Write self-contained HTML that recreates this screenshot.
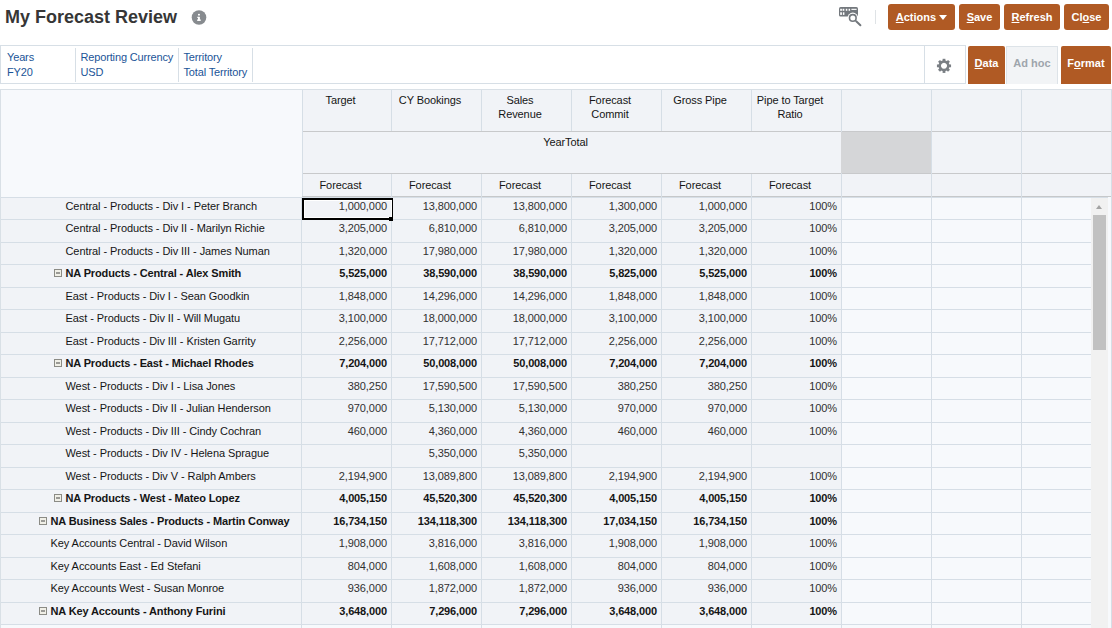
<!DOCTYPE html><html><head><meta charset="utf-8"><title>My Forecast Review</title><style>*{box-sizing:border-box}
html,body{margin:0;padding:0;background:#fff;width:1112px;height:628px;overflow:hidden;font-family:"Liberation Sans",sans-serif;position:relative}
body>div{position:absolute}
.title{left:5px;top:6px;font-size:18px;line-height:22px;font-weight:bold;color:#363636;white-space:nowrap}
.info{left:191px;top:9px;width:16px;height:16px;line-height:0}
.kbd{left:838px;top:6px;line-height:0}
.sep{left:875px;top:10px;width:1px;height:14px;background:#dfe3e6}
.btn{top:4px;height:26px;background:#b05a24;color:#fff;border-radius:3px;font-size:11px;font-weight:bold;text-align:center;line-height:26px;white-space:nowrap}
.tri{display:inline-block;width:0;height:0;border-left:4.5px solid transparent;border-right:4.5px solid transparent;border-top:5px solid #fff;vertical-align:middle;margin-left:0;position:relative;top:-1px}
.pov{left:0;top:45px;width:966px;height:39px;border:1px solid #d7dfe6;background:#fff}
.povc{top:50px;font-size:11px;letter-spacing:-0.15px;line-height:14.5px;color:#1b5497;white-space:nowrap}
.povsep{top:48px;width:1px;height:34px;background:#d7dfe6}
.gearsep{left:924px;top:45px;width:1px;height:39px;background:#d7dfe6}
.gear{left:934px;top:56px;line-height:0}
.tab{top:46px;height:38px;font-size:11px;font-weight:bold;text-align:center;line-height:34px;white-space:nowrap}
.tab.act{background:#b05a24;color:#fff;border-radius:2px 2px 0 0}
.tab.adhoc{background:#f2f4f6;color:#9ea5ac;border:1px solid #dde3e8;border-bottom:none;line-height:32px}
.gbg{left:0;top:89px;width:1112px;height:539px;background:#f7f9fc}
.corner{left:0;top:89px;width:302px;height:107px;background:#f7f9fc}
.hbg{background:#f1f3f7}
.h2gray{left:841px;top:132px;width:90px;height:41px;background:#d5d6d8;z-index:1}
.dbg{left:1px;width:840px;background:#f1f3f7}
.hl{height:1px;background:#d6dee6}
.vl{width:1px;background:#d6dee6}
.ht{font-size:11px;letter-spacing:-0.1px;color:#151515;text-align:center;line-height:14px;white-space:nowrap}
.h1t{top:93px}
.h2t{top:135px}
.h3t{top:178px}
.t{font-size:11px;letter-spacing:-0.07px;line-height:16px;height:16px;margin-top:1px;color:#151515;white-space:nowrap}
.t.n{text-align:right;color:#303030}
.t.b{font-weight:bold;color:#151515;letter-spacing:-0.13px}
.ex{width:8px;height:8px;border:1px solid #8b8b85;background:#f0efe7}
.ex:after{content:"";position:absolute;left:1px;top:2px;width:4px;height:2px;background:#9a9a96}
.sel{left:302px;top:198px;width:91px;height:22px;border:2px solid #000;border-right-width:1.5px;box-shadow:inset 0 0 0 1px #fff}
.selh{left:389px;top:217px;width:4px;height:4px;background:#000}
.sb{left:1091px;top:198px;width:17px;height:430px;background:#f1f1f1}
.sbup{position:absolute;left:5px;top:7px;width:0;height:0;border-left:3.5px solid transparent;border-right:3.5px solid transparent;border-bottom:4px solid #a3a3a3}
.thumb{position:absolute;left:2px;top:17px;width:13px;height:135px;background:#c1c1c1}
</style></head><body>
<div class="title">My Forecast Review</div>
<div class="info"><svg width="16" height="16" viewBox="0 0 16 16"><circle cx="8" cy="8.5" r="7.3" fill="#878b8f"/><g fill="#fff"><rect x="7" y="4.9" width="1.9" height="1.6"/><rect x="7" y="7.8" width="1.9" height="4"/><rect x="6.1" y="7.8" width="1.5" height="1"/><rect x="6.1" y="10.5" width="3.7" height="1.4"/></g></svg></div>
<div class="kbd"><svg width="24" height="22" viewBox="0 0 24 22"><rect x="1" y="1.1" width="19" height="9.4" rx="1.6" fill="#73787d"/><g fill="#fff"><rect x="2.2" y="2.8" width="1.7" height="2"/><rect x="4.6" y="2.8" width="1.7" height="2"/><rect x="7.8" y="2.8" width="1.5" height="2"/><rect x="10.6" y="2.8" width="1.5" height="2"/><rect x="13.4" y="2.8" width="5.2" height="1.1"/><rect x="2.2" y="6.3" width="1.7" height="2.6"/><rect x="4.9" y="6.3" width="1.5" height="2.6"/></g><circle cx="14.8" cy="11.9" r="5.3" fill="#fff"/><circle cx="14.8" cy="11.9" r="3.3" fill="none" stroke="#73787d" stroke-width="1.6"/><line x1="18.2" y1="15.3" x2="22.4" y2="19.3" stroke="#73787d" stroke-width="2" stroke-linecap="round"/></svg></div>
<div class="sep"></div>
<div class="btn" style="left:888px;width:67px"><u>A</u>ctions <span class="tri"></span></div>
<div class="btn" style="left:959px;width:41px"><u>S</u>ave</div>
<div class="btn" style="left:1004px;width:56px"><u>R</u>efresh</div>
<div class="btn" style="left:1064px;width:45px">Cl<u>o</u>se</div>
<div class="pov"></div>
<div class="povc" style="left:7px">Years<br>FY20</div>
<div class="povsep" style="left:75px"></div>
<div class="povc" style="left:80.5px">Reporting Currency<br>USD</div>
<div class="povsep" style="left:178px"></div>
<div class="povc" style="left:183.5px">Territory<br>Total Territory</div>
<div class="povsep" style="left:252px"></div>
<div class="gearsep"></div>
<div class="gear"><svg width="20" height="20" viewBox="0 0 20 20"><g fill="#7a7f84"><rect x="8.6" y="2.8" width="2.8" height="3.2" transform="rotate(0 10 9.86)"/><rect x="8.6" y="2.8" width="2.8" height="3.2" transform="rotate(45 10 9.86)"/><rect x="8.6" y="2.8" width="2.8" height="3.2" transform="rotate(90 10 9.86)"/><rect x="8.6" y="2.8" width="2.8" height="3.2" transform="rotate(135 10 9.86)"/><rect x="8.6" y="2.8" width="2.8" height="3.2" transform="rotate(180 10 9.86)"/><rect x="8.6" y="2.8" width="2.8" height="3.2" transform="rotate(225 10 9.86)"/><rect x="8.6" y="2.8" width="2.8" height="3.2" transform="rotate(270 10 9.86)"/><rect x="8.6" y="2.8" width="2.8" height="3.2" transform="rotate(315 10 9.86)"/><path fill-rule="evenodd" d="M10 4.36a5.5 5.5 0 1 0 0.001 0ZM10 6.86a3 3 0 1 1 -0.001 0Z"/></g></svg></div>
<div class="tab act" style="left:968px;width:37px"><u>D</u>ata</div>
<div class="tab adhoc" style="left:1006px;width:52px">Ad hoc</div>
<div class="tab act" style="left:1061px;width:50px">F<u>o</u>rmat</div>

<div class="gbg"></div>
<div class="corner"></div>
<div class="hbg" style="left:302px;top:90px;width:810px;height:106px"></div>
<div class="h2gray"></div>
<div class="dbg" style="top:198px;height:21px"></div>
<div class="dbg" style="top:220px;height:22px"></div>
<div class="dbg" style="top:243px;height:21px"></div>
<div class="dbg" style="top:265px;height:22px"></div>
<div class="dbg" style="top:288px;height:21px"></div>
<div class="dbg" style="top:310px;height:22px"></div>
<div class="dbg" style="top:333px;height:21px"></div>
<div class="dbg" style="top:355px;height:22px"></div>
<div class="dbg" style="top:378px;height:21px"></div>
<div class="dbg" style="top:400px;height:22px"></div>
<div class="dbg" style="top:423px;height:21px"></div>
<div class="dbg" style="top:445px;height:22px"></div>
<div class="dbg" style="top:468px;height:21px"></div>
<div class="dbg" style="top:490px;height:22px"></div>
<div class="dbg" style="top:513px;height:21px"></div>
<div class="dbg" style="top:535px;height:22px"></div>
<div class="dbg" style="top:558px;height:21px"></div>
<div class="dbg" style="top:580px;height:22px"></div>
<div class="dbg" style="top:603px;height:21px"></div>
<div class="hl" style="top:89px;left:0;width:1112px;background:#d9e0e6"></div>
<div class="hl" style="top:131px;left:302px;width:810px;background:#c8c9cb"></div>
<div class="hl" style="top:173px;left:302px;width:810px;background:#c8c9cb"></div>
<div class="hl" style="top:196px;left:302px;width:810px;background:#c6c8ca"></div>
<div class="hl" style="top:197px;left:0;width:1108px"></div>
<div class="hl" style="top:219px;left:0;width:1091px"></div>
<div class="hl" style="top:242px;left:0;width:1091px"></div>
<div class="hl" style="top:264px;left:0;width:1091px"></div>
<div class="hl" style="top:287px;left:0;width:1091px"></div>
<div class="hl" style="top:309px;left:0;width:1091px"></div>
<div class="hl" style="top:332px;left:0;width:1091px"></div>
<div class="hl" style="top:354px;left:0;width:1091px"></div>
<div class="hl" style="top:377px;left:0;width:1091px"></div>
<div class="hl" style="top:399px;left:0;width:1091px"></div>
<div class="hl" style="top:422px;left:0;width:1091px"></div>
<div class="hl" style="top:444px;left:0;width:1091px"></div>
<div class="hl" style="top:467px;left:0;width:1091px"></div>
<div class="hl" style="top:489px;left:0;width:1091px"></div>
<div class="hl" style="top:512px;left:0;width:1091px"></div>
<div class="hl" style="top:534px;left:0;width:1091px"></div>
<div class="hl" style="top:557px;left:0;width:1091px"></div>
<div class="hl" style="top:579px;left:0;width:1091px"></div>
<div class="hl" style="top:602px;left:0;width:1091px"></div>
<div class="hl" style="top:624px;left:0;width:1091px"></div>
<div class="vl" style="left:0;top:89px;height:539px;background:#d9e0e6"></div>
<div class="vl" style="left:302px;top:90px;height:106px"></div>
<div class="vl" style="left:301px;top:197px;height:431px"></div>
<div class="vl" style="left:391px;top:90px;height:41px"></div>
<div class="vl" style="left:391px;top:174px;height:454px"></div>
<div class="vl" style="left:481px;top:90px;height:41px"></div>
<div class="vl" style="left:481px;top:174px;height:454px"></div>
<div class="vl" style="left:571px;top:90px;height:41px"></div>
<div class="vl" style="left:571px;top:174px;height:454px"></div>
<div class="vl" style="left:661px;top:90px;height:41px"></div>
<div class="vl" style="left:661px;top:174px;height:454px"></div>
<div class="vl" style="left:751px;top:90px;height:41px"></div>
<div class="vl" style="left:751px;top:174px;height:454px"></div>
<div class="vl" style="left:841px;top:90px;height:538px"></div>
<div class="vl" style="left:931px;top:90px;height:538px"></div>
<div class="vl" style="left:1021px;top:90px;height:538px"></div>
<div class="vl" style="left:1111px;top:89px;height:539px"></div>
<div class="ht h1t" style="left:302px;width:77px">Target</div>
<div class="ht h3t" style="left:302px;width:77px">Forecast</div>
<div class="ht h1t" style="left:391px;width:78px">CY Bookings</div>
<div class="ht h3t" style="left:391px;width:78px">Forecast</div>
<div class="ht h1t" style="left:481px;width:78px">Sales<br>Revenue</div>
<div class="ht h3t" style="left:481px;width:78px">Forecast</div>
<div class="ht h1t" style="left:571px;width:78px">Forecast<br>Commit</div>
<div class="ht h3t" style="left:571px;width:78px">Forecast</div>
<div class="ht h1t" style="left:661px;width:78px">Gross Pipe</div>
<div class="ht h3t" style="left:661px;width:78px">Forecast</div>
<div class="ht h1t" style="left:751px;width:78px">Pipe to Target<br>Ratio</div>
<div class="ht h3t" style="left:751px;width:78px">Forecast</div>
<div class="ht h2t" style="left:302px;width:527px">YearTotal</div>
<div class="t" style="left:65.5px;top:197px">Central - Products - Div I - Peter Branch</div>
<div class="t n" style="left:302px;width:85px;top:197px">1,000,000</div>
<div class="t n" style="left:391px;width:86px;top:197px">13,800,000</div>
<div class="t n" style="left:481px;width:86px;top:197px">13,800,000</div>
<div class="t n" style="left:571px;width:86px;top:197px">1,300,000</div>
<div class="t n" style="left:661px;width:86px;top:197px">1,000,000</div>
<div class="t n" style="left:751px;width:86px;top:197px">100%</div>
<div class="t" style="left:65.5px;top:219px">Central - Products - Div II - Marilyn Richie</div>
<div class="t n" style="left:302px;width:85px;top:219px">3,205,000</div>
<div class="t n" style="left:391px;width:86px;top:219px">6,810,000</div>
<div class="t n" style="left:481px;width:86px;top:219px">6,810,000</div>
<div class="t n" style="left:571px;width:86px;top:219px">3,205,000</div>
<div class="t n" style="left:661px;width:86px;top:219px">3,205,000</div>
<div class="t n" style="left:751px;width:86px;top:219px">100%</div>
<div class="t" style="left:65.5px;top:242px">Central - Products - Div III - James Numan</div>
<div class="t n" style="left:302px;width:85px;top:242px">1,320,000</div>
<div class="t n" style="left:391px;width:86px;top:242px">17,980,000</div>
<div class="t n" style="left:481px;width:86px;top:242px">17,980,000</div>
<div class="t n" style="left:571px;width:86px;top:242px">1,320,000</div>
<div class="t n" style="left:661px;width:86px;top:242px">1,320,000</div>
<div class="t n" style="left:751px;width:86px;top:242px">100%</div>
<div class="ex" style="left:54px;top:269px"></div>
<div class="t b" style="left:65.5px;top:264px">NA Products - Central - Alex Smith</div>
<div class="t n b" style="left:302px;width:85px;top:264px">5,525,000</div>
<div class="t n b" style="left:391px;width:86px;top:264px">38,590,000</div>
<div class="t n b" style="left:481px;width:86px;top:264px">38,590,000</div>
<div class="t n b" style="left:571px;width:86px;top:264px">5,825,000</div>
<div class="t n b" style="left:661px;width:86px;top:264px">5,525,000</div>
<div class="t n b" style="left:751px;width:86px;top:264px">100%</div>
<div class="t" style="left:65.5px;top:287px">East - Products - Div I - Sean Goodkin</div>
<div class="t n" style="left:302px;width:85px;top:287px">1,848,000</div>
<div class="t n" style="left:391px;width:86px;top:287px">14,296,000</div>
<div class="t n" style="left:481px;width:86px;top:287px">14,296,000</div>
<div class="t n" style="left:571px;width:86px;top:287px">1,848,000</div>
<div class="t n" style="left:661px;width:86px;top:287px">1,848,000</div>
<div class="t n" style="left:751px;width:86px;top:287px">100%</div>
<div class="t" style="left:65.5px;top:309px">East - Products - Div II - Will Mugatu</div>
<div class="t n" style="left:302px;width:85px;top:309px">3,100,000</div>
<div class="t n" style="left:391px;width:86px;top:309px">18,000,000</div>
<div class="t n" style="left:481px;width:86px;top:309px">18,000,000</div>
<div class="t n" style="left:571px;width:86px;top:309px">3,100,000</div>
<div class="t n" style="left:661px;width:86px;top:309px">3,100,000</div>
<div class="t n" style="left:751px;width:86px;top:309px">100%</div>
<div class="t" style="left:65.5px;top:332px">East - Products - Div III - Kristen Garrity</div>
<div class="t n" style="left:302px;width:85px;top:332px">2,256,000</div>
<div class="t n" style="left:391px;width:86px;top:332px">17,712,000</div>
<div class="t n" style="left:481px;width:86px;top:332px">17,712,000</div>
<div class="t n" style="left:571px;width:86px;top:332px">2,256,000</div>
<div class="t n" style="left:661px;width:86px;top:332px">2,256,000</div>
<div class="t n" style="left:751px;width:86px;top:332px">100%</div>
<div class="ex" style="left:54px;top:359px"></div>
<div class="t b" style="left:65.5px;top:354px">NA Products - East - Michael Rhodes</div>
<div class="t n b" style="left:302px;width:85px;top:354px">7,204,000</div>
<div class="t n b" style="left:391px;width:86px;top:354px">50,008,000</div>
<div class="t n b" style="left:481px;width:86px;top:354px">50,008,000</div>
<div class="t n b" style="left:571px;width:86px;top:354px">7,204,000</div>
<div class="t n b" style="left:661px;width:86px;top:354px">7,204,000</div>
<div class="t n b" style="left:751px;width:86px;top:354px">100%</div>
<div class="t" style="left:65.5px;top:377px">West - Products - Div I - Lisa Jones</div>
<div class="t n" style="left:302px;width:85px;top:377px">380,250</div>
<div class="t n" style="left:391px;width:86px;top:377px">17,590,500</div>
<div class="t n" style="left:481px;width:86px;top:377px">17,590,500</div>
<div class="t n" style="left:571px;width:86px;top:377px">380,250</div>
<div class="t n" style="left:661px;width:86px;top:377px">380,250</div>
<div class="t n" style="left:751px;width:86px;top:377px">100%</div>
<div class="t" style="left:65.5px;top:399px">West - Products - Div II - Julian Henderson</div>
<div class="t n" style="left:302px;width:85px;top:399px">970,000</div>
<div class="t n" style="left:391px;width:86px;top:399px">5,130,000</div>
<div class="t n" style="left:481px;width:86px;top:399px">5,130,000</div>
<div class="t n" style="left:571px;width:86px;top:399px">970,000</div>
<div class="t n" style="left:661px;width:86px;top:399px">970,000</div>
<div class="t n" style="left:751px;width:86px;top:399px">100%</div>
<div class="t" style="left:65.5px;top:422px">West - Products - Div III - Cindy Cochran</div>
<div class="t n" style="left:302px;width:85px;top:422px">460,000</div>
<div class="t n" style="left:391px;width:86px;top:422px">4,360,000</div>
<div class="t n" style="left:481px;width:86px;top:422px">4,360,000</div>
<div class="t n" style="left:571px;width:86px;top:422px">460,000</div>
<div class="t n" style="left:661px;width:86px;top:422px">460,000</div>
<div class="t n" style="left:751px;width:86px;top:422px">100%</div>
<div class="t" style="left:65.5px;top:444px">West - Products - Div IV - Helena Sprague</div>
<div class="t n" style="left:391px;width:86px;top:444px">5,350,000</div>
<div class="t n" style="left:481px;width:86px;top:444px">5,350,000</div>
<div class="t" style="left:65.5px;top:467px">West - Products - Div V - Ralph Ambers</div>
<div class="t n" style="left:302px;width:85px;top:467px">2,194,900</div>
<div class="t n" style="left:391px;width:86px;top:467px">13,089,800</div>
<div class="t n" style="left:481px;width:86px;top:467px">13,089,800</div>
<div class="t n" style="left:571px;width:86px;top:467px">2,194,900</div>
<div class="t n" style="left:661px;width:86px;top:467px">2,194,900</div>
<div class="t n" style="left:751px;width:86px;top:467px">100%</div>
<div class="ex" style="left:54px;top:494px"></div>
<div class="t b" style="left:65.5px;top:489px">NA Products - West - Mateo Lopez</div>
<div class="t n b" style="left:302px;width:85px;top:489px">4,005,150</div>
<div class="t n b" style="left:391px;width:86px;top:489px">45,520,300</div>
<div class="t n b" style="left:481px;width:86px;top:489px">45,520,300</div>
<div class="t n b" style="left:571px;width:86px;top:489px">4,005,150</div>
<div class="t n b" style="left:661px;width:86px;top:489px">4,005,150</div>
<div class="t n b" style="left:751px;width:86px;top:489px">100%</div>
<div class="ex" style="left:39px;top:517px"></div>
<div class="t b" style="left:50.5px;top:512px">NA Business Sales - Products - Martin Conway</div>
<div class="t n b" style="left:302px;width:85px;top:512px">16,734,150</div>
<div class="t n b" style="left:391px;width:86px;top:512px">134,118,300</div>
<div class="t n b" style="left:481px;width:86px;top:512px">134,118,300</div>
<div class="t n b" style="left:571px;width:86px;top:512px">17,034,150</div>
<div class="t n b" style="left:661px;width:86px;top:512px">16,734,150</div>
<div class="t n b" style="left:751px;width:86px;top:512px">100%</div>
<div class="t" style="left:50.5px;top:534px">Key Accounts Central - David Wilson</div>
<div class="t n" style="left:302px;width:85px;top:534px">1,908,000</div>
<div class="t n" style="left:391px;width:86px;top:534px">3,816,000</div>
<div class="t n" style="left:481px;width:86px;top:534px">3,816,000</div>
<div class="t n" style="left:571px;width:86px;top:534px">1,908,000</div>
<div class="t n" style="left:661px;width:86px;top:534px">1,908,000</div>
<div class="t n" style="left:751px;width:86px;top:534px">100%</div>
<div class="t" style="left:50.5px;top:557px">Key Accounts East - Ed Stefani</div>
<div class="t n" style="left:302px;width:85px;top:557px">804,000</div>
<div class="t n" style="left:391px;width:86px;top:557px">1,608,000</div>
<div class="t n" style="left:481px;width:86px;top:557px">1,608,000</div>
<div class="t n" style="left:571px;width:86px;top:557px">804,000</div>
<div class="t n" style="left:661px;width:86px;top:557px">804,000</div>
<div class="t n" style="left:751px;width:86px;top:557px">100%</div>
<div class="t" style="left:50.5px;top:579px">Key Accounts West - Susan Monroe</div>
<div class="t n" style="left:302px;width:85px;top:579px">936,000</div>
<div class="t n" style="left:391px;width:86px;top:579px">1,872,000</div>
<div class="t n" style="left:481px;width:86px;top:579px">1,872,000</div>
<div class="t n" style="left:571px;width:86px;top:579px">936,000</div>
<div class="t n" style="left:661px;width:86px;top:579px">936,000</div>
<div class="t n" style="left:751px;width:86px;top:579px">100%</div>
<div class="ex" style="left:39px;top:607px"></div>
<div class="t b" style="left:50.5px;top:602px">NA Key Accounts - Anthony Furini</div>
<div class="t n b" style="left:302px;width:85px;top:602px">3,648,000</div>
<div class="t n b" style="left:391px;width:86px;top:602px">7,296,000</div>
<div class="t n b" style="left:481px;width:86px;top:602px">7,296,000</div>
<div class="t n b" style="left:571px;width:86px;top:602px">3,648,000</div>
<div class="t n b" style="left:661px;width:86px;top:602px">3,648,000</div>
<div class="t n b" style="left:751px;width:86px;top:602px">100%</div>
<div class="sel"></div><div class="selh"></div>
<div class="sb"><div class="sbup"></div><div class="thumb"></div></div>
</body></html>
